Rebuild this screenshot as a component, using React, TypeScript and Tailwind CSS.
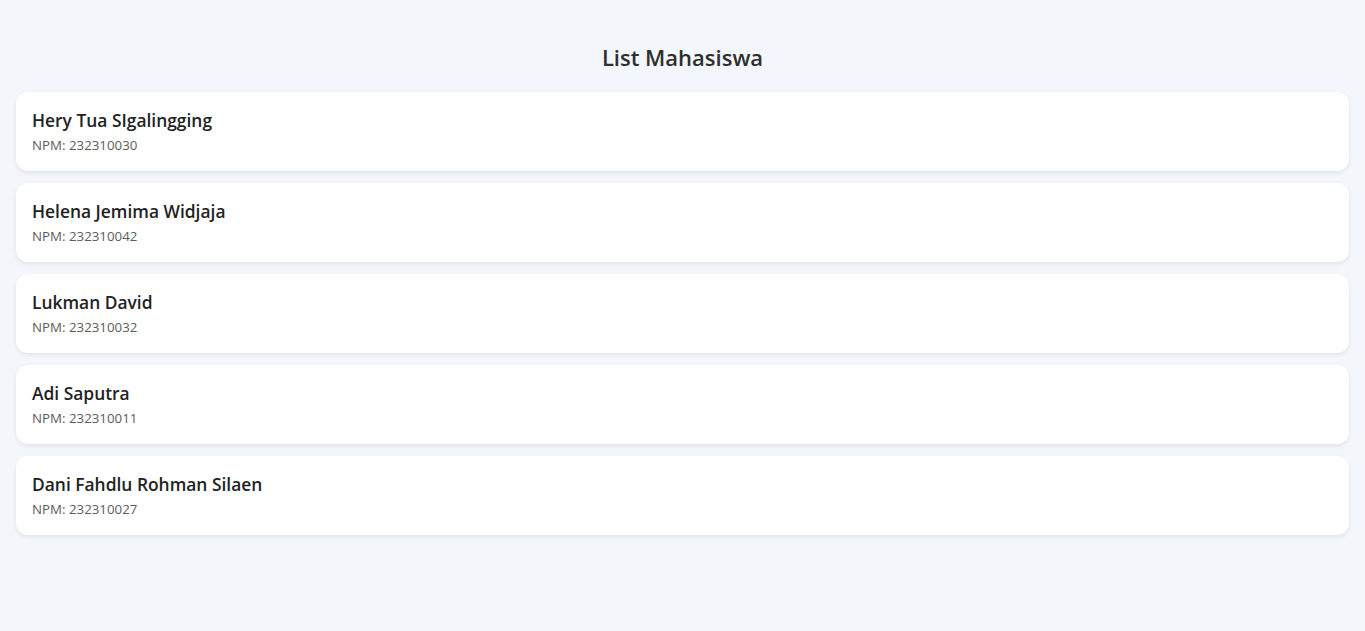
const students = [
  { name: "Hery Tua SIgalingging", npm: "232310030" },
  { name: "Helena Jemima Widjaja", npm: "232310042" },
  { name: "Lukman David", npm: "232310032" },
  { name: "Adi Saputra", npm: "232310011" },
  { name: "Dani Fahdlu Rohman Silaen", npm: "232310027" },
];

export default function App() {
  return (
    <div
      className="min-h-screen bg-[#f3f6fa] px-4 pt-[43px]"
      style={{ fontFamily: '"Open Sans", "Noto Sans", sans-serif' }}
    >
      <h2 className="text-center text-[22px] font-semibold leading-[29px] text-[#2f2f2f]">List Mahasiswa</h2>
      <ul className="mt-[20px] flex flex-col gap-3">
        {students.map((s) => (
          <li
            key={s.npm}
            className="rounded-xl bg-white px-4 py-4 shadow-[0_2px_4px_rgba(0,0,0,0.08)]"
          >
            <div className="text-[17.4px] font-semibold leading-[24px] text-[#222]">{s.name}</div>
            <div className="mt-1 text-[13.3px] leading-[19px] text-[#5c5c5c]">NPM: {s.npm}</div>
          </li>
        ))}
      </ul>
    </div>
  );
}
